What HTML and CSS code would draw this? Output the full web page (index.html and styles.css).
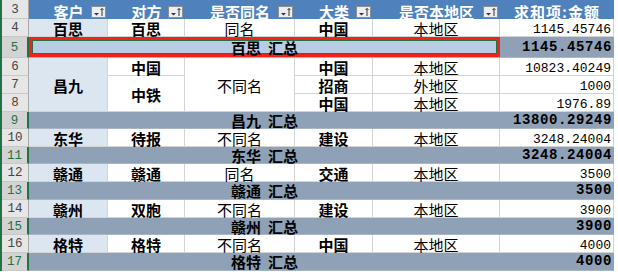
FILE: index.html
```html
<!DOCTYPE html>
<html lang="zh">
<head>
<meta charset="utf-8">
<title>数据透视表</title>
<link rel="stylesheet" href="styles.css">
</head>
<body>
<div class="sheet">
  <div class="rn">3</div>
  <div class="hd">客户<svg class="fb" viewBox="0 0 15 12"><rect x="0.5" y="0.5" width="14" height="11" fill="#ECEEF1" stroke="#8E8E8E"/><path d="M3 7h5l-2.5 2.5z" fill="#333"/><path d="M11 10V2.5M9.5 4L11 2.5L12.5 4" stroke="#333" fill="none"/></svg></div>
  <div class="hd">对方<svg class="fb" viewBox="0 0 15 12"><rect x="0.5" y="0.5" width="14" height="11" fill="#ECEEF1" stroke="#8E8E8E"/><path d="M3 7h5l-2.5 2.5z" fill="#333"/><path d="M11 10V2.5M9.5 4L11 2.5L12.5 4" stroke="#333" fill="none"/></svg></div>
  <div class="hd">是否同名<svg class="fb" viewBox="0 0 15 12"><rect x="0.5" y="0.5" width="14" height="11" fill="#ECEEF1" stroke="#8E8E8E"/><path d="M3 7h5l-2.5 2.5z" fill="#333"/><path d="M11 10V2.5M9.5 4L11 2.5L12.5 4" stroke="#333" fill="none"/></svg></div>
  <div class="hd">大类<svg class="fb" viewBox="0 0 15 12"><rect x="0.5" y="0.5" width="14" height="11" fill="#ECEEF1" stroke="#8E8E8E"/><path d="M3 7h5l-2.5 2.5z" fill="#333"/><path d="M11 10V2.5M9.5 4L11 2.5L12.5 4" stroke="#333" fill="none"/></svg></div>
  <div class="hd">是否本地区<svg class="fb" viewBox="0 0 15 12"><rect x="0.5" y="0.5" width="14" height="11" fill="#ECEEF1" stroke="#8E8E8E"/><path d="M3 7h5l-2.5 2.5z" fill="#333"/><path d="M11 10V2.5M9.5 4L11 2.5L12.5 4" stroke="#333" fill="none"/></svg></div>
  <div class="hd sum">求和项:金额</div>

  <div class="rn">4</div>
  <div class="c k b">百思</div>
  <div class="c b">百思</div>
  <div class="c">同名</div>
  <div class="c b">中国</div>
  <div class="c">本地区</div>
  <div class="c n">1145.45746</div>

  <div class="rn sel">5</div>
  <div class="st cur">百思  汇总</div>
  <div class="sv">1145.45746</div>

  <div class="rn">6</div>
  <div class="c k b r3">昌九</div>
  <div class="c b">中国</div>
  <div class="c r3">不同名</div>
  <div class="c b">中国</div>
  <div class="c">本地区</div>
  <div class="c n">10823.40249</div>

  <div class="rn">7</div>
  <div class="c b r2">中铁</div>
  <div class="c b">招商</div>
  <div class="c">外地区</div>
  <div class="c n">1000</div>

  <div class="rn">8</div>
  <div class="c b">中国</div>
  <div class="c">本地区</div>
  <div class="c n">1976.89</div>

  <div class="rn sel">9</div>
  <div class="st">昌九  汇总</div>
  <div class="sv">13800.29249</div>

  <div class="rn">10</div>
  <div class="c k b">东华</div>
  <div class="c b">待报</div>
  <div class="c">不同名</div>
  <div class="c b">建设</div>
  <div class="c">本地区</div>
  <div class="c n">3248.24004</div>

  <div class="rn sel">11</div>
  <div class="st">东华  汇总</div>
  <div class="sv">3248.24004</div>

  <div class="rn">12</div>
  <div class="c k b">赣通</div>
  <div class="c b">赣通</div>
  <div class="c">同名</div>
  <div class="c b">交通</div>
  <div class="c">本地区</div>
  <div class="c n">3500</div>

  <div class="rn sel">13</div>
  <div class="st">赣通  汇总</div>
  <div class="sv">3500</div>

  <div class="rn">14</div>
  <div class="c k b">赣州</div>
  <div class="c b">双胞</div>
  <div class="c">不同名</div>
  <div class="c b">建设</div>
  <div class="c">本地区</div>
  <div class="c n">3900</div>

  <div class="rn sel">15</div>
  <div class="st">赣州  汇总</div>
  <div class="sv">3900</div>

  <div class="rn">16</div>
  <div class="c k b">格特</div>
  <div class="c b">格特</div>
  <div class="c">不同名</div>
  <div class="c b">中国</div>
  <div class="c">本地区</div>
  <div class="c n">4000</div>

  <div class="rn sel">17</div>
  <div class="st">格特  汇总</div>
  <div class="sv">4000</div>
</div>
</body>
</html>
```
FILE: styles.css
```css
body {
  margin: 0;
  background: #ffffff;
  font-family: "Noto Sans CJK SC", "Noto Sans", sans-serif;
}

.sheet {
  display: grid;
  grid-template-columns: 27px 79px 77px 110px 78px 127px 114px;
  grid-template-rows: 19px 18px 21px 18px 18px 18px 17px 18px 17px 18px 18px 18px 17px 18px 18px;
  border-left: 2px solid #217346;
  width: max-content;
}

.sheet > div {
  box-sizing: border-box;
  display: flex;
  align-items: center;
  justify-content: center;
  white-space: pre;
  line-height: 15px;
}

.rn {
  background: #e6e6e6;
  color: #444444;
  font-family: "Liberation Mono", monospace;
  font-size: 12.5px;
  border-right: 1px solid #a8a8a8;
  border-bottom: 1px solid #c8c8c8;
  padding-top: 2px;
}

.rn.sel {
  background: #d3d3d3;
  color: #217346;
  border-right: 2px solid #217346;
}

.hd {
  position: relative;
  background: #4f81bd;
  color: #ffffff;
  font-weight: 700;
  font-size: 15px;
  padding-top: 4px;
}

.hd.sum {
  letter-spacing: 1px;
}

.fb {
  position: absolute;
  right: 2px;
  bottom: 1px;
  width: 15px;
  height: 12px;
}

.c {
  background: #ffffff;
  color: #000000;
  font-size: 15px;
  border-right: 1px solid #d4d4d4;
  border-bottom: 1px solid #d4d4d4;
  padding-top: 1px;
}

.c.k {
  background: #dce6f1;
}

.c.b {
  font-weight: 700;
}

.r2 {
  grid-row: span 2;
}

.r3 {
  grid-row: span 3;
}

.c.n {
  justify-content: flex-end;
  padding-right: 2px;
  padding-top: 3px;
  font-family: "Liberation Mono", monospace;
  font-size: 13px;
  line-height: 13px;
}

.st {
  grid-column: span 5;
  background: #8fa1b6;
  border-bottom: 1px solid #aab6c5;
  font-weight: 700;
  font-size: 15px;
  color: #000000;
}

.st.cur {
  background: #b8cce4;
  box-shadow: inset 0 0 0 3px #f2211a, inset 0 0 0 4px #217346;
}

.sv {
  background: #8fa1b6;
  border-bottom: 1px solid #aab6c5;
  justify-content: flex-end !important;
  padding-right: 2px;
  font-family: "Liberation Mono", monospace;
  font-weight: 700;
  font-size: 14px;
  line-height: 14px;
  letter-spacing: 0.6px;
  color: #000000;
}
```
